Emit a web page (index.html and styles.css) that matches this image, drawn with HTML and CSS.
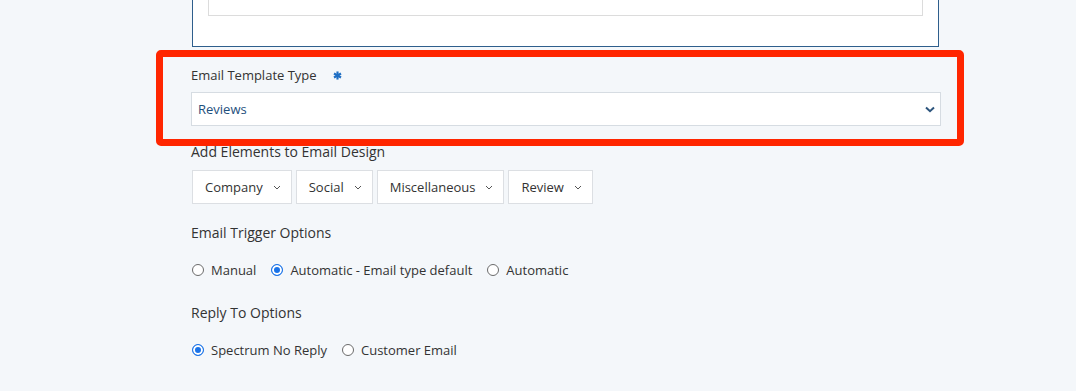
FILE: index.html
```html
<!DOCTYPE html>
<html>
<head>
<meta charset="utf-8">
<link rel="stylesheet" href="styles.css">
</head>
<body>
<div class="page">
  <div class="prev-box"><div class="prev-inner"></div></div>

  <div class="field template-field">
    <div class="field-label sm">Email Template Type <svg class="req" width="9" height="9" viewBox="0 0 10 10"><g stroke="#1f6fc4" stroke-width="2.4" stroke-linecap="butt"><line x1="5" y1="0.5" x2="5" y2="9.5"/><line x1="1.1" y1="2.75" x2="8.9" y2="7.25"/><line x1="1.1" y1="7.25" x2="8.9" y2="2.75"/></g></svg></div>
    <div class="select">
      <span class="select-value">Reviews</span>
      <svg class="select-caret" width="10" height="7" viewBox="0 0 10 7"><path d="M1 1.5 L5 5.2 L9 1.5" fill="none" stroke="#2d557d" stroke-width="2"/></svg>
    </div>
  </div>

  <div class="field elements-field">
    <div class="field-label">Add Elements to Email Design</div>
    <div class="btn-row">
      <button class="dd-btn">Company <svg class="chev" width="8" height="5" viewBox="0 0 8 5"><path d="M1 1 L4 4 L7 1" fill="none" stroke="#555" stroke-width="1"/></svg></button>
      <button class="dd-btn">Social <svg class="chev" width="8" height="5" viewBox="0 0 8 5"><path d="M1 1 L4 4 L7 1" fill="none" stroke="#555" stroke-width="1"/></svg></button>
      <button class="dd-btn">Miscellaneous <svg class="chev" width="8" height="5" viewBox="0 0 8 5"><path d="M1 1 L4 4 L7 1" fill="none" stroke="#555" stroke-width="1"/></svg></button>
      <button class="dd-btn">Review <svg class="chev" width="8" height="5" viewBox="0 0 8 5"><path d="M1 1 L4 4 L7 1" fill="none" stroke="#555" stroke-width="1"/></svg></button>
    </div>
  </div>

  <div class="field trigger-field">
    <div class="field-label">Email Trigger Options</div>
    <div class="radio-row">
      <label class="radio"><span class="dot"></span>Manual</label>
      <label class="radio"><span class="dot on"></span>Automatic - Email type default</label>
      <label class="radio"><span class="dot"></span>Automatic</label>
    </div>
  </div>

  <div class="field reply-field">
    <div class="field-label">Reply To Options</div>
    <div class="radio-row">
      <label class="radio"><span class="dot on"></span>Spectrum No Reply</label>
      <label class="radio"><span class="dot"></span>Customer Email</label>
    </div>
  </div>

  <div class="highlight"></div>
</div>
</body>
</html>
```

FILE: styles.css
```css
html, body {
  margin: 0;
  padding: 0;
  background: #f4f7fa;
  font-family: "Open Sans", "Liberation Sans", sans-serif;
  color: #333;
}

.page {
  position: relative;
  width: 750px;
  margin-left: 191px;
  height: 391px;
}

.prev-box {
  background: #fff;
  border: 1px solid #2e5e8c;
  border-top: 0;
  margin-left: 1px;
  width: 747px;
  padding: 0 15px 30px 15px;
  box-sizing: border-box;
}

.prev-inner {
  height: 15px;
  background: #fff;
  border: 1px solid #dcdcdc;
  border-top: 0;
}

.field-label {
  font-size: 14px;
  line-height: 20px;
  color: #333;
}

.field-label.sm {
  font-size: 13px;
  line-height: 18px;
  display: flex;
  align-items: center;
  gap: 0;
}

.req {
  margin-left: 16px;
  margin-top: 1px;
}

.template-field {
  margin-top: 19px;
}

.select {
  margin-top: 8px;
  height: 34px;
  box-sizing: border-box;
  background: #fff;
  border: 1px solid #d6dce2;
  display: flex;
  align-items: center;
  justify-content: space-between;
  padding: 0 5px 0 6px;
}

.select-value {
  font-size: 13px;
  color: #1e4f7d;
}

.elements-field {
  margin-top: 16px;
}

.btn-row {
  display: flex;
  gap: 4px;
  margin-top: 8px;
  padding-left: 1px;
}

.dd-btn {
  height: 34px;
  box-sizing: border-box;
  background: #fff;
  border: 1px solid #dcdfe3;
  border-radius: 0;
  font-family: "Open Sans", "Liberation Sans", sans-serif;
  font-size: 13px;
  color: #333;
  padding: 0 10px 0 12px;
  display: flex;
  align-items: center;
  gap: 10px;
}

.chev {
  display: block;
  margin-top: 1px;
}

.trigger-field {
  margin-top: 19px;
}

.reply-field {
  margin-top: 23px;
}

.radio-row {
  display: flex;
  gap: 14px;
  margin-top: 17px;
}

.radio {
  display: flex;
  align-items: center;
  gap: 7px;
  font-size: 13px;
  line-height: 20px;
  color: #333;
}

.dot {
  width: 12px;
  height: 12px;
  box-sizing: border-box;
  border: 1px solid #6b6b6b;
  border-radius: 50%;
  background: #fff;
  margin-left: 1px;
}

.dot.on {
  border: 1px solid #1a73e8;
  background: #1a73e8;
  box-shadow: inset 0 0 0 2px #fff;
}

.highlight {
  position: absolute;
  left: -35px;
  top: 50px;
  width: 808px;
  height: 96px;
  box-sizing: border-box;
  border: 7px solid #ff2600;
  border-radius: 5px;
  pointer-events: none;
}
```
